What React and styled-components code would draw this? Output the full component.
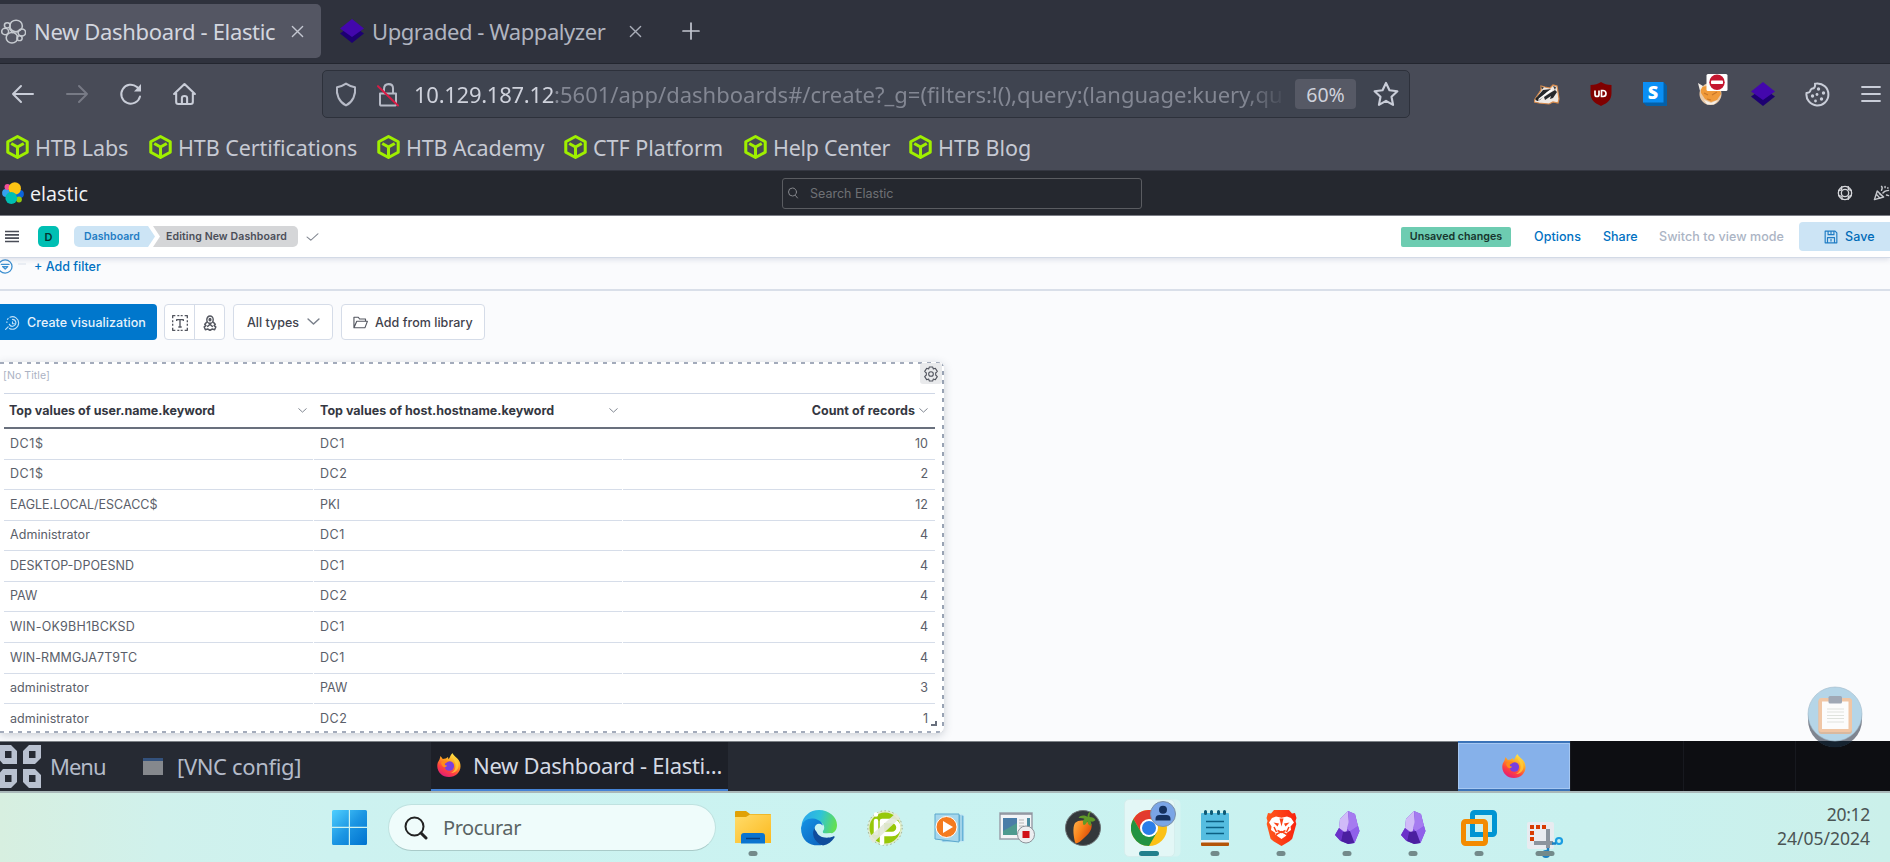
import React from "react";
import styled, { createGlobalStyle, css } from "styled-components";

const Global = createGlobalStyle`
  * { box-sizing: border-box; }
  body { margin: 0; width: 1890px; height: 862px; overflow: hidden; background: #fafbfd; }
  svg { display: block; flex: none; }
`;

const ui = `"Noto Sans", sans-serif`;
const app = `Inter, "Liberation Sans", sans-serif`;

const Screen = styled.div`
  width: 1890px;
  height: 862px;
  display: flex;
  flex-direction: column;
  overflow: hidden;
  position: relative;
`;

const Text = styled.span`
  display: block;
  flex: none;
  white-space: nowrap;
  font-family: ${(p) => p.$font || app};
  font-size: ${(p) => p.$size || 13}px;
  font-weight: ${(p) => p.$weight || 400};
  color: ${(p) => p.$color || "#343741"};
  letter-spacing: ${(p) => p.$ls || 0}px;
  ${(p) => p.$w && css`width: ${p.$w}px;`}
`;

const Gap = styled.div`
  flex: none;
  width: ${(p) => p.$w}px;
`;

/* ---------- browser chrome ---------- */

const TabBar = styled.div`
  height: 64px;
  flex: none;
  display: flex;
  align-items: center;
  background: #2f323d;
  border-bottom: 1px solid #23262f;
  padding-bottom: 1px;
`;

const Tab = styled.div`
  height: 54px;
  width: ${(p) => p.$w}px;
  flex: none;
  display: flex;
  align-items: center;
  padding-left: ${(p) => p.$pad}px;
  border-radius: 0 5px 5px 0;
  background: ${(p) => (p.$active ? "#545663" : "transparent")};
`;

const Toolbar = styled.div`
  height: 60px;
  flex: none;
  display: flex;
  align-items: center;
  background: #484b57;
`;

const UrlBar = styled.div`
  width: 1088px;
  height: 48px;
  flex: none;
  display: flex;
  align-items: center;
  padding-left: 11px;
  border: 1px solid #2d313b;
  border-radius: 5px;
  background: #3f4450;
`;

const UrlText = styled.div`
  width: 874px;
  flex: none;
  display: flex;
  mask-image: linear-gradient(90deg, #000 830px, transparent 874px);
`;

const Zoom = styled.div`
  width: 61px;
  height: 30px;
  flex: none;
  display: flex;
  align-items: center;
  justify-content: center;
  border-radius: 4px;
  background: #565965;
`;

const Extensions = styled.div`
  display: flex;
  margin-left: 110px;
`;

const Extension = styled.div`
  width: 54px;
  height: 48px;
  display: flex;
  align-items: center;
  justify-content: center;
  padding-left: ${(p) => p.$shift || 0}px;
  padding-bottom: ${(p) => p.$lift || 0}px;
`;

const SBox = styled.div`
  width: 24px;
  height: 24px;
  display: flex;
  align-items: center;
  justify-content: center;
  padding: 0 4px 4px 0;
  background: linear-gradient(#0a8ff5, #0a8ff5) 0 0 / 20.5px 20.5px no-repeat, #0560a8;
  clip-path: polygon(0 0, 20.5px 0, 24px 3.5px, 24px 24px, 3.5px 24px, 0 20.5px);
`;

const SLetter = styled.span`
  font: 800 18px/20px "Open Sans", sans-serif;
  color: #fff;
`;

const Bookmarks = styled.div`
  height: 47px;
  flex: none;
  display: flex;
  align-items: center;
  padding-left: 6px;
  background: #484b57;
  border-bottom: 1px solid #343741;
`;

const Bookmark = styled.div`
  width: ${(p) => p.$w}px;
  flex: none;
  display: flex;
  align-items: center;
  gap: 6px;
`;

/* ---------- elastic ---------- */

const Header = styled.div`
  height: 45px;
  flex: none;
  display: flex;
  align-items: center;
  background: #25282f;
  border-bottom: 1px solid #7d7f86;
`;

const Search = styled.div`
  width: 360px;
  height: 31px;
  flex: none;
  display: flex;
  align-items: center;
  padding-left: 4px;
  border: 1.5px solid #5a5c61;
  border-radius: 3px;
`;

const CrumbBar = styled.div`
  height: 42px;
  flex: none;
  display: flex;
  align-items: center;
  background: #fff;
  border-bottom: 1px solid #d3dae6;
  box-shadow: 0 2px 5px rgba(80, 95, 130, 0.16);
  position: relative;
  z-index: 1;
`;

const Space = styled.div`
  width: 21px;
  height: 21px;
  flex: none;
  display: flex;
  align-items: center;
  justify-content: center;
  border-radius: 5px;
  background: #00bfb3;
`;

const Crumb = styled.div`
  height: 21px;
  width: ${(p) => p.$w}px;
  flex: none;
  display: flex;
  align-items: center;
  ${(p) =>
    p.$last
      ? css`
          padding-left: 13px;
          margin-left: -2px;
          background: #d5d6d8;
          border-radius: 0 5px 5px 0;
          clip-path: polygon(0 0, 100% 0, 100% 100%, 0 100%, 7px 50%);
        `
      : css`
          padding-left: 10px;
          background: #cce4f5;
          border-radius: 5px 0 0 5px;
          clip-path: polygon(0 0, 74px 0, 100% 50%, 74px 100%, 0 100%);
        `}
`;

const Badge = styled.div`
  width: 110px;
  height: 20px;
  flex: none;
  display: flex;
  align-items: center;
  justify-content: center;
  border-radius: 2px;
  background: #6dccb1;
`;

const SaveButton = styled.div`
  width: 91px;
  height: 29px;
  flex: none;
  display: flex;
  align-items: center;
  padding-left: 25px;
  border-radius: 4px 0 0 4px;
  background: #cce4f5;
`;

const FilterBar = styled.div`
  height: 33px;
  flex: none;
  display: flex;
  align-items: center;
  padding-bottom: 15px;
  background: #fafbfd;
  border-bottom: 2px solid #d9dfe9;
`;

const Body = styled.div`
  height: 450px;
  flex: none;
  background: #fafbfd;
`;

const Actions = styled.div`
  display: flex;
  align-items: center;
  padding-top: 13px;
`;

const Button = styled.div`
  width: ${(p) => p.$w}px;
  height: 36px;
  flex: none;
  display: flex;
  align-items: center;
  padding-left: ${(p) => p.$pad}px;
  margin-right: 8px;
  border-radius: 4px;
  border: 1px solid #d5dce8;
  background: #fff;
  ${(p) =>
    p.$primary &&
    css`
      margin-right: 7px;
      background: #0077cc;
      border: 0;
      border-radius: 0 4px 4px 0;
    `}
`;

const IconGroup = styled.div`
  width: 61px;
  height: 36px;
  flex: none;
  display: flex;
  margin-right: 8px;
  border: 1px solid #d5dce8;
  border-radius: 4px;
  background: #fff;
`;

const IconCell = styled.div`
  flex: 1;
  display: flex;
  align-items: center;
  justify-content: center;
  padding-top: 2px;
  & + & {
    border-left: 1px solid #d5dce8;
  }
`;

const dotsX = "repeating-linear-gradient(90deg, #a3abbb 0 4px, transparent 4px 9px)";
const dotsY = "repeating-linear-gradient(180deg, #98a2b3 0 4px, transparent 4px 9px)";

const Panel = styled.div`
  width: 944px;
  height: 371px;
  margin-top: 22px;
  position: relative;
  background: ${dotsX} 0 0 / 100% 2px no-repeat, ${dotsX} 0 100% / 100% 2px no-repeat,
    ${dotsY} 100% 0 / 2px 100% no-repeat, #fff;
  border-radius: 0 6px 6px 0;
  box-shadow: 0 2px 9px rgba(60, 70, 90, 0.25);
  padding: 2px 9px 0 4px;
`;

const PanelTitle = styled.div`
  height: 29px;
  display: flex;
  align-items: center;
  padding-bottom: 6px;
  margin-left: -1px;
`;

const Gear = styled.div`
  position: absolute;
  right: 2px;
  top: 1px;
  width: 22px;
  height: 21px;
  display: flex;
  align-items: center;
  justify-content: center;
  background: #e9eaec;
  border-radius: 3px;
`;

const Resize = styled.div`
  position: absolute;
  right: 7px;
  bottom: 7px;
  width: 6px;
  height: 5px;
  border: solid #69707d;
  border-width: 0 2px 2px 0;
`;

const Row = styled.div`
  display: grid;
  grid-template-columns: 310px 309px 1fr;
  height: ${(p) => (p.$head ? 36 : 30.58)}px;
  ${(p) =>
    p.$head &&
    css`
      border-top: 1px solid #cfd7e6;
      border-bottom: 2px solid #69707d;
    `}
`;

const Cell = styled.div`
  display: flex;
  align-items: center;
  justify-content: ${(p) => (p.$right ? "flex-end" : "flex-start")};
  padding: 0 7px 1.5px 6px;
  border-bottom: ${(p) => (p.$line ? "1.5px solid #d6dde9" : "0")};
  margin-right: ${(p) => (p.$right ? 0 : 1)}px;
`;

const HeadCell = styled.div`
  display: flex;
  align-items: center;
  justify-content: ${(p) => (p.$right ? "flex-end" : "space-between")};
  gap: 4px;
  padding: 0 ${(p) => p.$end || 7}px 0 ${(p) => p.$pad || 6}px;
`;

/* ---------- remote desktop bar ---------- */

const DeskBar = styled.div`
  height: 50px;
  flex: none;
  display: flex;
  align-items: center;
  background: #262a33;
  box-shadow: inset 0 1px 0 #7d8287;
`;

const DeskLabel = styled(Text)`
  padding-bottom: 1px;
`;

const Task = styled.div`
  width: 297px;
  height: 50px;
  flex: none;
  display: flex;
  align-items: center;
  padding: 0 0 1px 6px;
  background: #1d2028;
  border-top: 1px solid #7d8287;
  border-bottom: 2px solid #4583d6;
`;

const Workspace = styled.div`
  width: ${(p) => p.$w}px;
  height: 50px;
  flex: none;
  display: flex;
  align-items: center;
  justify-content: center;
  background: #0d0e12;
  border-left: 1px solid #17191f;
  ${(p) =>
    p.$active &&
    css`
      background: #86b1ea;
      border: solid #3b73b8;
      border-width: 2px 0;
      box-shadow: inset 0 0 0 1px #a5c7f2;
    `}
`;

/* ---------- windows taskbar ---------- */

const Taskbar = styled.div`
  height: 71px;
  flex: none;
  display: flex;
  align-items: center;
  border-top: 2px solid #a9b8b9;
  background: linear-gradient(90deg, #d7efe0 0, #d0f1ec 160px, #cdf2f0 330px, #caf3f1 900px, #c9f1ef 1600px, #cbf0ea 1890px);
`;

const Pill = styled.div`
  width: 328px;
  height: 47px;
  flex: none;
  display: flex;
  align-items: center;
  padding-left: 15px;
  border-radius: 24px;
  background: #effcfb;
  border: 1.5px solid #bfe2e0;
  border-bottom-color: #a9cbc9;
`;

const Slot = styled.div`
  width: 66px;
  height: 69px;
  flex: none;
  display: flex;
  align-items: center;
  justify-content: center;
  padding-top: ${(p) => p.$drop || 0}px;
  padding-right: ${(p) => p.$back || 0}px;
  position: relative;
`;

const Dot = styled.div`
  position: absolute;
  left: 50%;
  bottom: 6px;
  height: 5px;
  width: ${(p) => p.$w || 9}px;
  transform: translateX(-50%);
  border-radius: 3px;
  background: ${(p) => p.$color || "#738a8a"};
`;

const ActiveTile = styled.div`
  width: 51px;
  height: 58px;
  display: flex;
  align-items: center;
  justify-content: center;
  border-radius: 5px;
  background: #e3f7f6;
  border: 1px solid #d5eeed;
  box-shadow: 6px 0 0 -0.5px #d6f4f2;
  position: relative;
`;

const Avatar = styled.div`
  position: absolute;
  left: 25px;
  top: 1px;
`;

const Clock = styled.div`
  margin-left: auto;
  padding: 0 20px 3px 0;
  display: flex;
  flex-direction: column;
  align-items: flex-end;
  line-height: 24px;
`;

const Floating = styled.div`
  position: absolute;
  left: 1807px;
  top: 686px;
`;

/* ---------- drawings ---------- */

const Stroke = ({ w = 24, h = w, vb = "0 0 24 24", c = "#c9cdd8", sw = 2, children, ...r }) => (
  <svg width={w} height={h} viewBox={vb} fill="none" stroke={c} strokeWidth={sw} strokeLinecap="round" strokeLinejoin="round" preserveAspectRatio="none" {...r}>
    {children}
  </svg>
);

const Close = ({ c }) => (
  <Stroke w={13} vb="0 0 14 14" c={c} sw={1.5}><path d="M1.5 1.5l11 11M12.5 1.5l-11 11" /></Stroke>
);

const Wappalyzer = () => (
  <svg width="24" height="24" viewBox="0 0 24 24">
    <path d="M0 14.5L12 6l12 8.5L12 24z" fill="#1d0071" />
    <path d="M0 9.5L12 0l12 9.5L12 18z" fill="#4307ad" />
  </svg>
);

const Cube = () => (
  <svg width="23" height="24" viewBox="0 0 22 24" fill="none" stroke="#9fef00" strokeWidth="2.9" strokeLinejoin="round" preserveAspectRatio="none">
    <path d="M11 1.500l9.300 5.200v10.600L11 22.500l-9.300-5.200V6.700z" />
    <path d="M5 8.400L11 12l6-3.600M11 12v10" />
  </svg>
);

const Cluster = () => (
  <Stroke w={25} h={25} vb="0 0 24 26" c="#c6cad0" sw={1.5}>
    <circle cx="14.500" cy="7.200" r="6" />
    <circle cx="10.500" cy="19.500" r="5.500" />
    <circle cx="4" cy="13" r="3.300" />
    <circle cx="20" cy="14" r="3.600" />
    <circle cx="6" cy="6.500" r="2.700" />
    <circle cx="17.800" cy="20" r="2.500" />
    <path d="M8 10l3 4M12 13.500l4-.5" />
  </Stroke>
);

const Badger = () => (
  <svg width="26" height="22" viewBox="0 0 26 22">
    <path d="M1 16L7 7V3l4 1 5 1 3-3 4 1 1 6 1 7-1 4-5-1-4 2-10-1-5-1z" fill="#efe9e4" stroke="#d98b4b" strokeWidth="1.200" />
    <path d="M2 15l7-8 8-1-4 3-7 8-3 1zM10 14l6-4 5-3 2 2-4 6-3 1 1-3-6 4z" fill="#26282c" />
    <path d="M7 3.500l3 1-2 2zM19 3l3 1-1 3z" fill="#3a3a3c" />
    <path d="M4 17l9-7 5-3" stroke="#fff" strokeWidth="1.500" fill="none" />
    <circle cx="3" cy="16" r="1.600" fill="#222" />
  </svg>
);

const UBlock = () => (
  <svg width="22" height="24" viewBox="0 0 22 24">
    <path d="M11 0c3 2 6 3 10.500 3v8c0 7-4 10-10.500 13C4.500 21 .5 18 .5 11V3C5 3 8 2 11 0z" fill="#800000" />
    <path d="M5 8.500v4a2 2 0 004 0v-4M11.500 8.500v6h1.500a3 3 0 000-6z" fill="none" stroke="#fff" strokeWidth="1.700" />
  </svg>
);

const Fox = () => (
  <svg width="30" height="32" viewBox="0 0 30 32">
    <circle cx="12.500" cy="20" r="11" fill="#e9c9a8" />
    <path d="M3 13l6-1 7 0 6 4 1 4-4 6-6 2-6-3-4-6z" fill="#f09a3a" />
    <path d="M0 9l5 3-3 5zM6 26l7 3 7-3-4 4.500-7 0z" fill="#f5efe8" />
    <path d="M6 19l4 2M14 21l5-3M9 25l4 1" stroke="#c9772a" strokeWidth="1.200" />
    <rect x="8.500" y="0" width="21" height="17" rx="1.500" fill="#fff" />
    <circle cx="19" cy="8.300" r="7.700" fill="#c4162f" />
    <rect x="13" y="6.600" width="12" height="3.500" rx=".8" fill="#fff" />
  </svg>
);

const Cookie = () => (
  <Stroke w={25} vb="0 0 25 25" sw={2}>
    <path d="M10 1.800C10.500 5 9 6.500 7.500 6.500S5.500 8 5 9.500 2.500 10.500 1.500 11a11 11 0 1010-9.500c-.5 0-1 .1-1.500.3z" />
    <g fill="#c9cdd8" stroke="none">
      <circle cx="13.500" cy="7" r="1.700" /><circle cx="18.500" cy="11" r="1.700" /><circle cx="12" cy="12.500" r="1.400" />
      <circle cx="7.500" cy="14" r="1.700" /><circle cx="16.500" cy="17" r="1.700" /><circle cx="10.500" cy="19" r="1.400" />
    </g>
  </Stroke>
);

const ElasticLogo = () => (
  <svg width="22" height="22" viewBox="0 0 22 22">
    <circle cx="4" cy="11" r="3.900" fill="#36a2ef" />
    <circle cx="18" cy="12" r="3.900" fill="#0b64dd" />
    <circle cx="5.500" cy="5" r="3" fill="#f04e98" />
    <circle cx="17" cy="17.500" r="2.900" fill="#93c90e" />
    <circle cx="12.800" cy="6.500" r="6.200" fill="#fec514" />
    <circle cx="9.300" cy="16" r="5.900" fill="#00bfb3" />
  </svg>
);

const Firefox = () => (
  <svg width="24" height="24" viewBox="0 0 24 24">
    <defs>
      <linearGradient id="ffx" x1=".8" y1="0" x2=".3" y2="1">
        <stop offset="0" stopColor="#fff44f" /><stop offset=".4" stopColor="#ffa01f" /><stop offset=".72" stopColor="#ff4040" /><stop offset="1" stopColor="#e01b7a" />
      </linearGradient>
    </defs>
    <path d="M2.500 6.500L3.500 3l2.300 3c1-.5 2-.7 3-.6L11 4l.5 2.200C13 5 13 2 15.500 0c.5 2.500 5 4.500 7 8.500 3.500 8-2.500 15.500-10.500 15.500S-1.500 17 .8 9.500z" fill="url(#ffx)" />
    <circle cx="12.300" cy="13" r="4.800" fill="#7a3fe0" />
    <path d="M4 10c2-3 6-3 8-1.500-2 .2-2.500 1.500-4.500 2 0 1.500 1 2 2.500 2-1 3-5 2-6-2.500z" fill="#ff8a1c" />
    <path d="M15 3c1 4 5 6 3 13-1 2-3 4-5 4 8 0 10-7 7.500-11.500C19 6 17 5 15 3z" fill="#ffcf3a" opacity=".75" />
  </svg>
);

const MenuLogo = () => (
  <svg width="41" height="43" viewBox="0 0 41 43" fill="#b9c1d0">
    <path d="M-2 0h13l6 6v13H3L-2 13zM29 0h12v13l-6 6H23V6zM-2 43h13l6-6V24H3l-5 6zM41 43V30l-6-6H23v13l6 6z" />
    <g fill="#262a33"><rect x="5" y="6" width="6.500" height="7" /><rect x="29" y="6" width="6.500" height="7" /><rect x="5" y="30" width="6.500" height="7" /><rect x="29" y="30" width="6.500" height="7" /></g>
  </svg>
);

const WindowsLogo = () => (
  <svg width="35" height="35" viewBox="0 0 35 35">
    <defs><linearGradient id="win" x1="0" y1="0" x2="35" y2="35" gradientUnits="userSpaceOnUse"><stop offset="0" stopColor="#4fd0ff" /><stop offset=".5" stopColor="#1c96e3" /><stop offset="1" stopColor="#0072cf" /></linearGradient></defs>
    <path d="M0 1.500Q0 0 1.500 0H16.800V16.800H0zM18 0h15.500Q35 0 35 1.500V16.800H18zM0 18h16.800V35H1.500Q0 35 0 33.500zM18 18h17v15.500q0 1.500-1.500 1.500H18z" fill="url(#win)" />
  </svg>
);

const Folder = () => (
  <svg width="36" height="33" viewBox="0 0 36 33">
    <defs><linearGradient id="fld" x1="0" y1="0" x2="1" y2="1"><stop offset="0" stopColor="#ffdc6b" /><stop offset="1" stopColor="#fcb91d" /></linearGradient></defs>
    <path d="M0 1Q0 0 1 0h10l4 3h20q1 0 1 1v5H0z" fill="#e0a106" />
    <path d="M0 6h11l4-2.500h21V32H0z" fill="url(#fld)" />
    <path d="M6 32.500v-7.500q0-3 3-3h18q3 0 3 3v7.500z" fill="#0b74cf" />
    <path d="M11 27.500h14" stroke="#083f7d" strokeWidth="1.500" />
  </svg>
);

const Edge = () => (
  <svg width="36" height="36" viewBox="0 0 36 36">
    <defs>
      <linearGradient id="ed1" x1="0" y1=".3" x2="1" y2=".5"><stop offset="0" stopColor="#2aa6ee" /><stop offset=".5" stopColor="#2fc3d8" /><stop offset="1" stopColor="#63e04f" /></linearGradient>
      <linearGradient id="ed2" x1="0" y1="0" x2="1" y2="1"><stop offset="0" stopColor="#1594e6" /><stop offset="1" stopColor="#0b5cb8" /></linearGradient>
    </defs>
    <path d="M.5 15C2 6 9 0 18 0c10 0 18 7 18 15 0 6-4 9-9 9-4 0-6-1-5-3 2-2 2-7-3-9-7-3-15-1-18.500 3z" fill="url(#ed1)" />
    <path d="M0 18C1 11 7 8 12 8.500c6 .5 9 4 10 7-6-2-8 3-7 8 1 6 6 10 12 9.500C17 38 0 36 0 18z" fill="url(#ed2)" />
    <path d="M14 18c-4 4-2 14 8 17.500 5-1 9-4 11.500-8 .5-1-.5-1.500-1.500-1C26 29 16 28 15 19.500z" fill="#0f4c9c" />
    <circle cx="18" cy="18" r="4.300" fill="#caf3f1" />
    <path d="M17 22c3 5 10 6.500 16 3.500l-3-2.500-8 .5-1-3z" fill="#caf3f1" />
  </svg>
);

const IpScan = () => (
  <svg width="36" height="36" viewBox="0 0 36 36">
    <circle cx="18" cy="18" r="16.500" fill="#97c808" stroke="#e0ecd0" strokeWidth="2" />
    <circle cx="18" cy="18" r="17.200" fill="none" stroke="#8aa080" strokeWidth=".8" strokeDasharray="1.500 2.500" />
    <path d="M9 4.500v.1M9 11v12M15 11v22M15 11h10a6 6 0 010 13h-8" stroke="#fff" strokeWidth="4.500" fill="none" strokeLinecap="round" />
    <path d="M29 3l4 5L6 33l-4-6z" fill="#e4e8dc" opacity=".92" />
  </svg>
);

const Media = () => (
  <svg width="32" height="32" viewBox="0 0 32 32">
    <path d="M6 2l21 .5 3 1v26L8 30z" fill="#68b3d8" stroke="#c7ebf5" />
    <path d="M27 3v26" stroke="#d9f2fa" />
    <path d="M1 2h24v28L1 27z" fill="#a6d7ec" stroke="#5ba8cd" />
    <circle cx="12.500" cy="15" r="10.500" fill="#f47b20" stroke="#fff" strokeWidth="1" />
    <path d="M9 9l10 6-10 6z" fill="#fff" />
  </svg>
);

const Recorder = () => (
  <svg width="36" height="32" viewBox="0 0 36 32">
    <rect x="1" y="1" width="32" height="26" fill="#f3f4f6" stroke="#9aa1ab" strokeWidth="1.500" />
    <path d="M1 2h32" stroke="#8b919b" strokeWidth="1.500" />
    <rect x="4" y="6" width="14" height="17" fill="#4d9a8f" /><path d="M4 6h14v5L4 19z" fill="#4a7da8" />
    <path d="M20 8h5M20 11h5M20 14h5" stroke="#ccc" strokeWidth="1.500" />
    <rect x="28" y="6" width="3" height="10" fill="#4a8ba0" />
    <circle cx="27" cy="22.500" r="8.500" fill="#eceef0" stroke="#8d9299" />
    <rect x="23.500" y="19" width="7" height="7" fill="#d01016" />
  </svg>
);

const Fruit = () => (
  <svg width="36" height="36" viewBox="0 0 36 36">
    <defs><linearGradient id="frt" x1="0" y1="0" x2="1" y2=".6"><stop offset="0" stopColor="#ffb04a" /><stop offset=".5" stopColor="#f9821a" /><stop offset="1" stopColor="#d9480a" /></linearGradient></defs>
    <circle cx="18" cy="18" r="17.500" fill="#34383b" stroke="#6d7375" />
    <path d="M10 13c4-4 12-3 16.500 1 1 6-3 10-7.500 14-4 4-8 7-9 4-1-4-3-14 0-19z" fill="url(#frt)" />
    <path d="M26.500 1c-3 1-4 3-4 6-3-2-7-2-9 1 3 0 5 0 6 1-2 1-2 4-1 6 2 0 3-2 4-4 0 2 1 4 3 5 1-1 1-3 0-5 1 1 3 1 5-1-1-2-3-3-6-3 0-2 0-4 2-6z" fill="#5f9a27" />
  </svg>
);

const Chrome = () => (
  <svg width="36" height="36" viewBox="0 0 36 36">
    <circle cx="18" cy="18" r="18" fill="#fbc116" />
    <path d="M18 9h15.600A18 18 0 002.400 9L10 22z" fill="#e33b2e" />
    <path d="M2.400 9A18 18 0 0018 36l7.800-13.500L18 26l-8-4z" fill="#229342" />
    <circle cx="18" cy="18" r="9" fill="#fff" /><circle cx="18" cy="18" r="7" fill="#2a7de9" />
  </svg>
);

const AvatarIcon = () => (
  <svg width="26" height="26" viewBox="0 0 26 26">
    <circle cx="13" cy="13" r="12.500" fill="#7aa5e6" stroke="#7d92a8" />
    <circle cx="13" cy="8.800" r="4" fill="#14315e" />
    <path d="M5.500 19.500v-1.500q0-4 4-4h7q4 0 4 4v1.500z" fill="#14315e" />
  </svg>
);

const Notepad = () => (
  <svg width="28" height="36" viewBox="0 0 28 36">
    <rect y="32" width="28" height="4" rx="1" fill="#b35408" /><rect y="29" width="28" height="3.500" fill="#eef2f4" />
    <path d="M0 4q0-1 1-1h26q1 0 1 1v26H0z" fill="#55bde0" />
    <path d="M5 11.500h18M5 17.500h18M5 23.500h18" stroke="#0b5f82" strokeWidth="1.600" />
    <path d="M4.500 1.500v2M10.500 1.500v2M17.500 1.500v2M23.500 1.500v2" stroke="#0d5a75" strokeWidth="3" strokeLinecap="round" />
  </svg>
);

const Brave = () => (
  <svg width="31" height="36" viewBox="0 0 31 36">
    <defs><linearGradient id="brv"><stop offset="0" stopColor="#ff5a1c" /><stop offset="1" stopColor="#f9230f" /></linearGradient></defs>
    <path d="M8 0h15l3 3.500 3-.5 1.500 5-1 3 .8 3-4 14.500Q26 30 15.500 36 5 30 4.500 28.500L.7 14l.8-3-1-3L2 3l3 .5z" fill="url(#brv)" />
    <path d="M6 8l4-1.500 5.500 1.200L21 6.500 25 8l3 4.500-3.500 4 .5 3.500-4.500 3 .5 1.500h-12l.5-1.500-4.500-3 .5-3.500L3 12.500zM10.500 25.500l5-3 5 3-5 3.500z" fill="#fff" />
    <path d="M7.500 12.500l5.500 1-1.500 3zM23.500 12.500l-5.500 1 1.500 3zM13.500 8.500l2 8 2-8z" fill="#fb4318" />
    <path d="M11.500 20.500l4 2 4-2M8 17l2.500 5M23 17l-2.500 5M10 24.500l5.500-2.800 5.500 2.800" fill="none" stroke="#fb4318" strokeWidth="1.500" />
  </svg>
);

const Obsidian = () => (
  <svg width="25" height="33" viewBox="0 0 25 33">
    <path d="M13 0l7 3 3 12 1.500 5-5 12-6 1-8-3L0 24l4-7 1-9z" fill="#7a45d8" />
    <path d="M13 0L5 8 4 17l7 5 3-9z" fill="#d0bbf8" />
    <path d="M13 0l7 3 3 12-8 6-3-4 2-7z" fill="#a57bf0" />
    <path d="M4 17l-4 7 5.500 6 2.500-9z" fill="#6a32c9" />
    <path d="M8 21l7-1 6 3-2 9-6 1-7-3z" fill="#4b1fa0" />
    <path d="M15 20l8-5 1.500 5-5 12z" fill="#8f60ea" />
  </svg>
);

const VMware = () => (
  <svg width="36" height="36" viewBox="0 0 36 36" fill="none" strokeWidth="5">
    <rect x="11.500" y="2.500" width="22" height="22" rx="2" stroke="#0095d3" />
    <rect x="2.500" y="11.500" width="22" height="22" rx="2" stroke="#f38b00" />
    <path d="M11.500 14v10.500H22" stroke="#0095d3" />
  </svg>
);

const Snip = () => (
  <svg width="37" height="37" viewBox="0 0 37 37">
    <rect width="27" height="27" rx="2" fill="#e8ebf0" />
    <path d="M3 5h4M9 5h4M15 5h4" stroke="#d83b01" strokeWidth="4" /><path d="M5 9v4M5 15v4" stroke="#d83b01" strokeWidth="4" />
    <path d="M21 7v19M7 21h19" stroke="#8b949e" strokeWidth="4" />
    <circle cx="32" cy="19" r="3" fill="none" stroke="#1b9de2" strokeWidth="2.200" />
    <path d="M25 21.500h4M21 26v4" stroke="#1b80c2" strokeWidth="2.500" />
    <circle cx="19" cy="32" r="3" fill="none" stroke="#1b80c2" strokeWidth="2.200" />
  </svg>
);

const Clipboard = () => (
  <svg width="56" height="62" viewBox="0 0 56 62">
    <circle cx="28" cy="34" r="27" fill="#7f8590" />
    <path d="M10.700 55a27 27 0 0034.600 0z" fill="#15222f" />
    <circle cx="28" cy="28" r="27" fill="#b5d5e7" stroke="#9fb9c9" strokeWidth=".6" />
    <rect x="11.500" y="13" width="33.500" height="35" rx="3" fill="#d9b99f" />
    <rect x="11.500" y="12" width="33.500" height="34" rx="3" fill="#f0c6a5" />
    <rect x="15" y="15.500" width="26.500" height="27.500" fill="#fcfcfc" />
    <path d="M20 23h17M20 26h17M20 29.500h17M20 32.500h17M20 36h17" stroke="#dfe2dd" strokeWidth="1.200" />
    <rect x="21.500" y="10" width="13.500" height="7.500" rx="1.500" fill="#a0a8b5" />
  </svg>
);

const Chevron = ({ w = 9 }) => (
  <Stroke w={w} h={w * 0.55} vb="0 0 10 6" c="#7a808b" sw={1.1}><path d="M.8 .8L5 5l4.200-4.200" /></Stroke>
);

/* ---------- data ---------- */

const bookmarks = [
  ["HTB Labs", 143, -0.15], ["HTB Certifications", 228, -0.08], ["HTB Academy", 187, -0.15],
  ["CTF Platform", 180, 0], ["Help Center", 165, -0.28], ["HTB Blog", 130, 0],
];

const rows = [
  ["DC1$", "DC1", 10], ["DC1$", "DC2", 2], ["EAGLE.LOCAL/ESCACC$", "PKI", 12],
  ["Administrator", "DC1", 4], ["DESKTOP-DPOESND", "DC1", 4], ["PAW", "DC2", 4],
  ["WIN-OK9BH1BCKSD", "DC1", 4], ["WIN-RMMGJA7T9TC", "DC1", 4], ["administrator", "PAW", 3],
  ["administrator", "DC2", 1],
];

const cellLs = { "WIN-OK9BH1BCKSD": 0.22, administrator: 0.1, Administrator: 0.05, "WIN-RMMGJA7T9TC": 0.07, "DC1$": 0.6 };

const link = { $size: 12.5, $weight: 500, $color: "#0071c2" };
const cell = { $size: 12.5, $color: "#5a5e69" };
const head = { $size: 12.5, $weight: 700 };

export default function App() {
  return (
    <Screen>
      <Global />
      <TabBar>
        <Tab $active $w={321} $pad={1}>
          <Cluster />
          <Gap $w={8} />
          <Text $font={ui} $size={22} $ls={-0.34} $color="#d3d6df" $w={257}>New Dashboard - Elastic</Text>
          <Close c="#c3c6d0" />
        </Tab>
        <Tab $w={350} $pad={19}>
          <Wappalyzer />
          <Gap $w={8} />
          <Text $font={ui} $size={22} $ls={-0.44} $color="#b1b5c0" $w={257}>Upgraded - Wappalyzer</Text>
          <Close c="#a9adb8" />
        </Tab>
        <Gap $w={11} />
        <Stroke w={18} vb="0 0 18 18" c="#c3c6d0" sw={1.7}><path d="M9 1v16M1 9h16" /></Stroke>
      </TabBar>

      <Toolbar>
        <Gap $w={11} />
        <Stroke w={24} h={20} vb="0 0 24 20"><path d="M10 2L2 10l8 8M2 10h20" /></Stroke>
        <Gap $w={30} />
        <Stroke w={24} h={20} vb="0 0 24 20" c="#777a85"><path d="M14 2l8 8-8 8M22 10H2" /></Stroke>
        <Gap $w={30} />
        <Stroke w={24} h={24}><path d="M21 14.500a9.500 9.500 0 11-3-9.500l3 3" /><path d="M22 2v7.500h-7z" fill="#c9cdd8" stroke="none" /></Stroke>
        <Gap $w={29} />
        <Stroke w={25} h={24}><path d="M2 12L12 2l10 10M4 11v9q0 2 2 2h12q2 0 2-2v-9M9.500 22v-6q0-2 2.500-2t2.500 2v6" /></Stroke>
        <Gap $w={125} />
        <UrlBar>
          <Stroke w={24} h={25} c="#b7bbc7"><path d="M12 1.500c3 2 6 3 9 3.500 1 7-2 14-9 17.500C5 19 2 12 3 5c3-.5 6-1.500 9-3.500z" /></Stroke>
          <Gap $w={18} />
          <Stroke w={24} h={25} c="#b7bbc7"><path d="M8 11V7q0-5 4.500-5T17 6v5M4 11h16v10q0 1.500-1.500 1.500h-13Q4 22.500 4 21z" /><path d="M2 4l20 18.500" stroke="#d81b45" /></Stroke>
          <Gap $w={14} />
          <UrlText>
            <Text $font={ui} $size={22} $ls={-0.27} $color="#cfd2dc">10.129.187.12</Text>
            <Text $font={ui} $size={22} $ls={0.01} $color="#838793">:5601/app/dashboards#/create?_g=(filters:!(),query:(language:kuery,</Text>
            <Text $font={ui} $size={22} $color="#838793">qu</Text>
          </UrlText>
          <Gap $w={7} />
          <Zoom><Text $font={ui} $size={19.500} $color="#cfd2dc">60%</Text></Zoom>
          <Gap $w={17} />
          <Stroke w={26} h={26}><path d="M12 1.800l3.200 6.700 7.300 1-5.400 5 1.400 7.500-6.500-3.700L5.500 22l1.400-7.500-5.400-5 7.300-1z" /></Stroke>
        </UrlBar>
        <Extensions>
          <Extension><Badger /></Extension>
          <Extension><UBlock /></Extension>
          <Extension><SBox><SLetter>S</SLetter></SBox></Extension>
          <Extension $shift={7} $lift={8}><Fox /></Extension>
          <Extension><Wappalyzer /></Extension>
          <Extension><Cookie /></Extension>
          <Extension><Stroke w={20} h={18} vb="0 0 20 18" sw={1.8}><path d="M1 2h18M1 9h18M1 16h18" /></Stroke></Extension>
        </Extensions>
      </Toolbar>

      <Bookmarks>
        {bookmarks.map(([name, w, ls]) => (
          <Bookmark key={name} $w={w}>
            <Cube />
            <Text $font={ui} $size={21.5} $ls={ls} $color="#c6c9d3">{name}</Text>
          </Bookmark>
        ))}
      </Bookmarks>

      <Header>
        <Gap $w={2} />
        <ElasticLogo />
        <Gap $w={6} />
        <Text $font={`"Open Sans", sans-serif`} $size={19.800} $color="#f2f3f5" $w={752}>elastic</Text>
        <Search>
          <Stroke w={12} c="#85878c"><circle cx="11" cy="10" r="8" /><path d="M17 17l4 5" /></Stroke>
          <Gap $w={11} />
          <Text $size={12.500} $color="#6f7175">Search Elastic</Text>
        </Search>
        <Gap $w={695} />
        <Stroke w={16} c="#d5d6da"><circle cx="12" cy="12" r="10" /><circle cx="12" cy="12" r="5.500" /><path d="M7 2.500v5L2.500 8M17 2.500V7l4.500 1M2.500 16l5 1v4.500M21.500 16L17 17v4.500" /></Stroke>
        <Gap $w={20} />
        <Stroke w={17} h={16} c="#c5c7cc"><path d="M6 9L2 22l13-4zM9 13l6 5M5 14l5 6M12 2c2 2 1 4 0 6M14 12c3-4 5-3 8-4M17 2v2M21 4v1M19 15l3 1" /></Stroke>
      </Header>

      <CrumbBar>
        <Gap $w={5} />
        <Stroke w={14} h={13} vb="0 0 14 13" c="#4a4d57" sw={1.700} strokeLinecap="butt"><path d="M0 1.500h14M0 4.800h14M0 8.200h14M0 11.500h14" /></Stroke>
        <Gap $w={19} />
        <Space><Text $size={11} $weight={600} $color="#06332f">D</Text></Space>
        <Gap $w={15} />
        <Crumb $w={81}><Text $size={10.500} $weight={600} $ls={0.06} $color="#1f7cc4">Dashboard</Text></Crumb>
        <Crumb $last $w={145}><Text $size={10.500} $weight={600} $ls={0.11} $color="#4b4e58">Editing New Dashboard</Text></Crumb>
        <Gap $w={8} />
        <Stroke w={13} h={8} vb="0 0 13 10" c="#7f848e" sw={1.200}><path d="M1 5l3.800 4L12 1" /></Stroke>
        <Gap $w={1082} />
        <Badge><Text $size={10.700} $weight={600} $color="#17352d">Unsaved changes</Text></Badge>
        <Gap $w={23} />
        <Text {...link} $ls={0.07} $w={69}>Options</Text>
        <Text {...link} $w={56}>Share</Text>
        <Text {...link} $ls={0.07} $color="#abb4c4" $w={140}>Switch to view mode</Text>
        <SaveButton>
          <Stroke w={14} c="#1f7cc4"><path d="M2 2h17l3 3v17H2zM7 2v6h10V2M6 22v-9h12v9M12 3v3M12 16v3" /></Stroke>
          <Gap $w={7} />
          <Text {...link} $ls={0.15} $color="#006bb8">Save</Text>
        </SaveButton>
      </CrumbBar>

      <FilterBar>
        <Stroke w={13} h={15} vb="4 0 20 24" c="#3c8fd0"><circle cx="12" cy="12" r="10.500" /><path d="M6 8.500h12M8 12h8l-4 4z" /></Stroke>
        <Gap $w={5} />
        <Stroke w={8} h={6} vb="0 0 8 6" c="#dbe2ec" sw={1}><path d="M0 1h8" /></Stroke>
        <Gap $w={8} />
        <Text {...link}>+ Add filter</Text>
      </FilterBar>

      <Body>
        <Actions>
          <Button $primary $w={157} $pad={5}>
            <Stroke w={15} c="#bfe0f7" sw={1.800}><path d="M7 21.500A10 10 0 108 3.500M12 7a5.500 5.500 0 11-5 8M12 11v3h3M1 23l4-4M3 12v-1M4 7l1-1.500" /></Stroke>
            <Gap $w={7} />
            <Text {...link} $ls={0.06} $color="#e6f2fb">Create visualization</Text>
          </Button>
          <IconGroup>
            <IconCell>
              <Stroke w={16} c="#53565f" strokeLinecap="butt"><path d="M1 5V1h4M19 1h4v4M23 19v4h-4M5 23H1v-4M8 1h3M13 1h3M8 23h3M13 23h3M1 8v3M1 13v3M23 8v3M23 13v3M7 9V7h10v2M12 7v11M9.500 18h5" /></Stroke>
            </IconCell>
            <IconCell>
              <Stroke w={14} h={16} c="#53565f" sw={2.400}><circle cx="12" cy="7" r="5.500" /><circle cx="12" cy="7" r="1.500" /><path d="M6 11l-3 3 2 2-3 2 2 4 4-1 4 2 4-2 4 1 2-4-3-2 2-2-3-3M8 17l4-3 4 3" /></Stroke>
            </IconCell>
          </IconGroup>
          <Button $w={100} $pad={13}>
            <Text {...link} $color="#3f424c" $w={60}>All types</Text>
            <Chevron w={13} />
          </Button>
          <Button $w={144} $pad={11}>
            <Stroke w={15} h={13} vb="0 0 24 22" c="#53565f" sw={1.800}><path d="M1.500 20V2h7l2 3H20v4M1.500 20L6 9h17l-4 11z" /></Stroke>
            <Gap $w={7} />
            <Text {...link} $ls={0.04} $color="#3f424c">Add from library</Text>
          </Button>
        </Actions>

        <Panel>
          <PanelTitle><Text $size={10.500} $ls={0.08} $color="#abb2c3">[No Title]</Text></PanelTitle>
          <Row $head>
            <HeadCell $pad={5}><Text {...head}>Top values of user.name.keyword</Text><Chevron /></HeadCell>
            <HeadCell $end={5}><Text {...head} $ls={0.02}>Top values of host.hostname.keyword</Text><Chevron /></HeadCell>
            <HeadCell $right><Text {...head} $ls={0.05}>Count of records</Text><Chevron /></HeadCell>
          </Row>
          {rows.map(([user, host, n], i) => (
            <Row key={i}>
              <Cell $line={i < 9}><Text {...cell} $ls={cellLs[user]}>{user}</Text></Cell>
              <Cell $line={i < 9}><Text {...cell} $ls={/\d/.test(host) ? 0.6 : 0}>{host}</Text></Cell>
              <Cell $right $line={i < 9}><Text {...cell}>{n}</Text></Cell>
            </Row>
          ))}
          <Gear><Stroke w={16} c="#4f525c" sw={1.600}><path d="M9.500 1.500h5l1 3 3-1 3 4.500-2.500 2.500v3L21.500 16l-3 4.500-3-1-1 3h-5l-1-3-3 1-3-4.500L5 13.500v-3L2.500 8l3-4.500 3 1z" /><circle cx="12" cy="12" r="3.500" /></Stroke></Gear>
          <Resize />
        </Panel>
      </Body>

      <DeskBar>
        <MenuLogo />
        <Gap $w={9} />
        <DeskLabel $font={ui} $size={22} $ls={-1} $color="#b4bbc9" $w={93}>Menu</DeskLabel>
        <svg width="20" height="17" viewBox="0 0 20 17"><rect width="20" height="17" fill="#85888d" /><rect width="20" height="3" fill="#33517c" /></svg>
        <Gap $w={14} />
        <DeskLabel $font={ui} $size={22} $ls={-0.35} $color="#b4bbc9" $w={254}>[VNC config]</DeskLabel>
        <Task>
          <Firefox />
          <Gap $w={12} />
          <Text $font={ui} $size={22} $ls={-0.3} $color="#d5dae4">New Dashboard - Elasti…</Text>
        </Task>
        <Gap $w={730} />
        <Workspace $active $w={112}><Firefox /></Workspace>
        <Workspace $w={113} />
        <Workspace $w={112} />
        <Workspace $w={95} />
      </DeskBar>

      <Taskbar>
        <Gap $w={332} />
        <WindowsLogo />
        <Gap $w={21} />
        <Pill>
          <Stroke w={24} c="#222"><circle cx="10.500" cy="10.500" r="9" /><path d="M17 17l5 5" strokeWidth="3" /></Stroke>
          <Gap $w={15} />
          <Text $font={ui} $size={20} $ls={-0.42} $color="#5a6464">Procurar</Text>
        </Pill>
        <Gap $w={4} />
        <Slot><Folder /><Dot /></Slot>
        <Slot><Edge /></Slot>
        <Slot><IpScan /></Slot>
        <Slot $back={3}><Media /></Slot>
        <Slot><Recorder /></Slot>
        <Slot><Fruit /></Slot>
        <Slot><ActiveTile><Chrome /><Avatar><AvatarIcon /></Avatar></ActiveTile><Dot $w={20} $color="#22808c" /></Slot>
        <Slot><Notepad /><Dot /></Slot>
        <Slot><Brave /><Dot /></Slot>
        <Slot><Obsidian /><Dot /></Slot>
        <Slot><Obsidian /><Dot /></Slot>
        <Slot><VMware /><Dot /></Slot>
        <Slot $drop={26}><Snip /><Dot $w={19} /></Slot>
        <Clock>
          <Text $font={ui} $size={17.500} $ls={-0.3} $color="#4a5454">20:12</Text>
          <Text $font={ui} $size={17.500} $color="#4a5454">24/05/2024</Text>
        </Clock>
      </Taskbar>
      <Floating><Clipboard /></Floating>
    </Screen>
  );
}
